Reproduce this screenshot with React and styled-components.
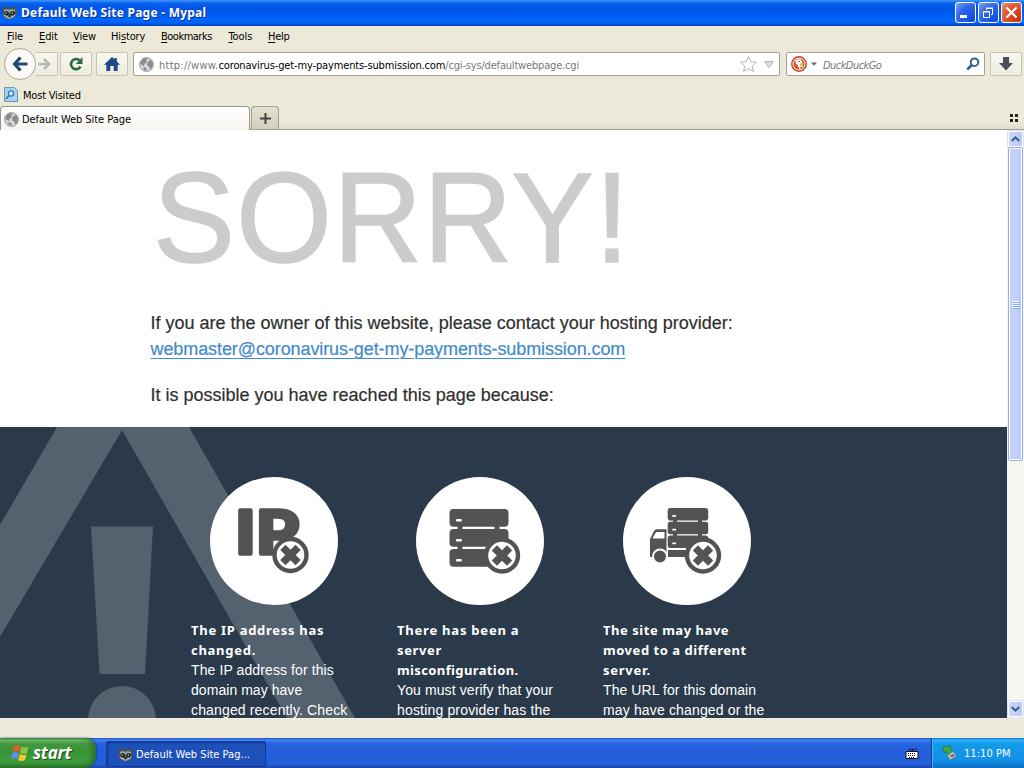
import React from 'react';
import styled, { createGlobalStyle, css } from 'styled-components';

const GlobalStyle = createGlobalStyle`
  * {
    box-sizing: border-box;
  }
  body {
    margin: 0;
    overflow: hidden;
    background: #ece9d8;
  }
`;

const uiFont = css`
  font-family: "DejaVu Sans Condensed", "Noto Sans", sans-serif;
  font-size: 11px;
`;

const Desktop = styled.div`
  ${uiFont}
  width: 1024px;
  height: 768px;
  display: flex;
  flex-direction: column;
  overflow: hidden;
  color: #000;
  background: #ece9d8;
  white-space: nowrap;
  svg {
    display: block;
    flex: none;
  }
`;

const Label = styled.span`
  display: block;
  letter-spacing: ${props => props.$track || 0}px;
  u {
    text-decoration: underline;
    text-underline-offset: 2px;
    text-decoration-thickness: 1px;
  }
`;

const TitleBar = styled.header`
  height: 26px;
  flex: none;
  display: flex;
  align-items: center;
  gap: 4px;
  padding: 0 2px 1px 2px;
  color: #fff;
  font-family: "Noto Sans", sans-serif;
  font-weight: 700;
  font-size: 12px;
  text-shadow: 1px 1px #0b2c94;
  background: linear-gradient(#3f9bff 0, #0a62ee 3px, #0055e5 8px, #0058ee 13px, #0066ff 20px, #0062f4 23px, #003fc0 26px);
`;

const WindowButtons = styled.div`
  display: flex;
  gap: 2px;
  margin-left: auto;
`;

const WindowButton = styled.button`
  width: 21px;
  height: 21px;
  padding: 0;
  display: flex;
  align-items: center;
  justify-content: center;
  border: 1px solid #fff;
  border-radius: 3px;
  background: ${props => (props.$close
    ? 'radial-gradient(circle at 90% 90%, #c8310b, #e1552f 60%, #ef9273)'
    : 'radial-gradient(circle at 90% 90%, #0f4be0, #2f66e8 60%, #7ba5f8)')};
`;

const MenuBar = styled.nav`
  height: 21px;
  flex: none;
  display: flex;
  align-items: center;
  padding-left: 7px;
`;

const MenuItem = styled(Label)`
  width: ${props => props.$width}px;
`;

const Toolbar = styled.div`
  height: 36px;
  flex: none;
  display: flex;
  align-items: center;
  padding: 0 2px 2px 4px;
`;

const BackButton = styled.button`
  width: 32px;
  height: 32px;
  flex: none;
  padding: 0;
  display: flex;
  align-items: center;
  justify-content: center;
  border: 1px solid #aca899;
  border-radius: 50%;
  background: #fbfaf6;
`;

const ToolButton = styled.button`
  width: ${props => props.$width || 32}px;
  height: 24px;
  flex: none;
  padding: 0;
  margin-right: ${props => props.$gap || 0}px;
  display: flex;
  align-items: center;
  justify-content: center;
  border: 1px solid #c9c5b5;
  border-left-width: ${props => (props.$joined ? 0 : 1)}px;
  border-radius: ${props => (props.$joined ? '0 2px 2px 0' : '2px')};
  background: linear-gradient(#f8f7f1, #efecdf);
`;

const Field = styled.div`
  width: ${props => props.$width}px;
  height: 24px;
  flex: none;
  display: flex;
  align-items: center;
  margin-right: ${props => props.$gap}px;
  padding: 0 ${props => props.$end}px 0 ${props => props.$start}px;
  border: 1px solid #a5a195;
  border-radius: 2px;
  background: #fff;
  color: #777;
`;

const Url = styled.span`
  display: block;
  margin: 2px auto 0 5px;
  letter-spacing: 0.25px;
  b {
    font-weight: 400;
    color: #000;
    letter-spacing: -0.14px;
  }
  i {
    font-style: normal;
    letter-spacing: -0.18px;
  }
`;

const Hint = styled(Label)`
  margin: 2px auto 0 5px;
  font-style: italic;
`;

const Bookmarks = styled.div`
  height: 23px;
  flex: none;
  display: flex;
  align-items: center;
  gap: 5px;
  padding: 1px 0 0 4px;
`;

const TabStrip = styled.div`
  height: 24px;
  flex: none;
  display: flex;
  align-items: flex-end;
  border-bottom: 1px solid #a39f92;
  background: linear-gradient(#ece9d8 70%, #e0ddcc);
`;

const Tab = styled.div`
  width: 250px;
  height: 24px;
  margin-bottom: -1px;
  padding: 1px 0 0 3px;
  display: flex;
  align-items: center;
  gap: 3px;
  border: 1px solid #97948a;
  border-bottom: 0;
  border-radius: 4px 4px 0 0;
  background: linear-gradient(#fff, #f6f5ee);
`;

const NewTab = styled.button`
  width: 28px;
  height: 23px;
  margin-left: 1px;
  padding: 0;
  display: flex;
  align-items: center;
  justify-content: center;
  border: 1px solid #a39f92;
  border-bottom: 0;
  border-radius: 4px 4px 0 0;
  background: linear-gradient(#e4e1d2, #d2cfc0);
`;

const TabMenu = styled.div`
  margin: 0 6px 7px auto;
  display: grid;
  grid-template-columns: 3px 3px;
  gap: 2px;
  i {
    height: 3px;
    background: #222;
  }
`;

const Viewport = styled.main`
  height: 588px;
  flex: none;
  display: flex;
  overflow: hidden;
`;

const Page = styled.div`
  width: 1007px;
  flex: none;
  background: #fff;
  color: #2f2f2f;
  font-family: "Liberation Sans", Arial, sans-serif;
  overflow: hidden;
`;

const Intro = styled.section`
  height: 297px;
  padding: 15px 0 0 150.5px;
  font-size: 18px;
  line-height: 26px;
  -webkit-text-stroke: 0.2px;
`;

const Sorry = styled.h1`
  margin: 0 0 20px;
  padding-left: 2px;
  height: 145px;
  color: #ccc;
  font-size: 128px;
  font-weight: 400;
  line-height: 145px;
  letter-spacing: 1.5px;
  -webkit-text-stroke: 1.6px #ccc;
  transform: scaleX(0.96);
  transform-origin: left;
`;

const Line = styled.p`
  margin: 0 0 ${props => props.$after || 0}px;
  letter-spacing: ${props => props.$track || 0}px;
`;

const MailLink = styled.a`
  color: #428bca;
  text-decoration: underline;
  text-decoration-thickness: 1px;
  text-underline-offset: 3px;
`;

const Reasons = styled.section`
  height: 291px;
  position: relative;
  display: flex;
  gap: 41px;
  padding: 50px 0 0 191px;
  background: #2a3a4a;
  color: #fff;
  overflow: hidden;
`;

const WarningSign = styled.svg`
  position: absolute;
  left: 0;
  top: 0;
`;

const Reason = styled.article`
  width: 165px;
  flex: none;
  position: relative;
  font-size: 14px;
  line-height: 20px;
`;

const Badge = styled.div`
  width: 128px;
  height: 128px;
  margin: 0 0 15px ${props => props.$left}px;
  border-radius: 50%;
  background: #fff;
`;

const Strong = styled(Label)`
  font-family: "Noto Sans", sans-serif;
  font-weight: 700;
  font-size: 13px;
`;

const ScrollBar = styled.div`
  width: 17px;
  display: flex;
  flex-direction: column;
  background: #f6f5ef;
  border-left: 1px solid #f0f3fa;
`;

const ScrollButton = styled.div`
  width: 15px;
  height: 16px;
  margin: 1px 0 1px;
  display: flex;
  align-items: center;
  justify-content: center;
  border: 1px solid #fff;
  border-radius: 2px;
  background: linear-gradient(90deg, #ccd8fc, #b9c9f5);
  box-shadow: 0 0 0 1px #d5e0fb;
`;

const Thumb = styled.div`
  width: 15px;
  height: 314px;
  margin: -1px 0 auto;
  display: flex;
  flex-direction: column;
  align-items: center;
  justify-content: center;
  gap: 1px;
  border: 1px solid #98b0e4;
  border-radius: 2px;
  box-shadow: inset 0 0 0 1px #fff;
  background: linear-gradient(90deg, #c4cffb 55%, #b4ccfc);
  i {
    width: 7px;
    height: 1px;
    background: #eef4fe;
    box-shadow: 1px 1px #8cb0f8;
  }
`;

const StatusBar = styled.div`
  height: 20px;
  flex: none;
  border-top: 1px solid #f3f1e6;
`;

const TaskBar = styled.footer`
  height: 30px;
  flex: none;
  display: flex;
  align-items: stretch;
  color: #fff;
  background: linear-gradient(#1f4fc0 0, #3f86f2 2px, #2a66e0 5px, #245edb 10px, #245edb 26px, #1c46a8 30px);
`;

const StartButton = styled.button`
  width: 96px;
  padding: 0 0 1px 10px;
  display: flex;
  align-items: center;
  gap: 3px;
  border: 0;
  border-radius: 0 10px 12px 0;
  color: #fff;
  font-family: "Noto Sans", sans-serif;
  font-style: italic;
  font-weight: 700;
  font-size: 17px;
  text-shadow: 1px 1px 1px #1c4a1c;
  background: linear-gradient(#2d7a2f 0, #6cb968 2px, #42963f 6px, #379437 14px, #3c9d3c 24px, #2b702b 30px);
  box-shadow: inset -6px 0 6px -3px #246b26, 1px 0 2px #1a45a8;
`;

const TaskButton = styled.div`
  width: 160px;
  height: 26px;
  margin: 3px 0 0 10px;
  padding-left: 11px;
  display: flex;
  align-items: center;
  gap: 3px;
  border: 1px solid #123a9c;
  border-radius: 2px;
  background: #1e50b9;
  box-shadow: inset 1px 1px 2px #143c92;
`;

const TrayIcons = styled.div`
  display: flex;
  align-items: center;
  margin-left: auto;
  padding: 0 12px 0 0;
`;

const Tray = styled.div`
  width: 93px;
  display: flex;
  align-items: center;
  gap: 6px;
  padding-left: 10px;
  border-left: 1px solid #0a3a9a;
  box-shadow: inset 1px 0 #3cc0f8;
  background: linear-gradient(#0d6fd0 0, #2fb4f6 2px, #159bea 5px, #1290e8 22px, #0f6fc4 30px);
`;

const Raccoon = ({ size = 15 }) => (
  <svg width={size} height={size} viewBox="0 0 16 16">
    <path d="M.5 1l4.500 2L8 2.300 11.500 3l4-2-.5 6 1 3-3 3.500-4.500 2h-1L3 13.500 0 10l1-3z" fill="#4a5350" />
    <path d="M2.500 5L7 4.500l1 2 1-2 4.500.5.5 2-3-1-2.200.8L8 8.500l-.8-1.700L5 6 2 7z" fill="#aab5b0" />
    <path d="M1 10l2.500.5 3 1.500h3l3-1.500L15 10l-2.500 3L8 15l-4.500-2z" fill="#a3aea9" />
    <circle cx="4.800" cy="9" r="2" fill="#0e161b" />
    <circle cx="11.200" cy="9" r="2" fill="#0e161b" />
    <path d="M3.800 8h1.300v1.300H3.800zM10.300 8h1.300v1.300h-1.300z" fill="#fff" />
    <path d="M6.500 11.500h3L8 13.500z" fill="#080c10" />
  </svg>
);

const Globe = () => (
  <svg width="15" height="15" viewBox="0 0 15 15">
    <circle cx="7.5" cy="7.5" r="6.9" fill="#d8d8d8" stroke="#969696" />
    <path d="M1 6.5L3.5 2 7 1l1.5 1.5L7 4l1 1.500-2.500 1L5 9 3 8zM9.500 4L12 3l2 3.500-.8 4-2 2-1-3L8 8.300l.5-2.500zM4.500 10l3 1v2.700l-3-1z" fill="#8b8b8b" />
  </svg>
);

const Cross = ({ x, y, r = 16 }) => (
  <g transform={`translate(${x} ${y})`}>
    <circle r={r} fill="#fff" stroke="#535353" strokeWidth="4.4" />
    <path d="M-7.6-7.6L7.6 7.6M-7.6 7.6L7.6-7.6" stroke="#535353" strokeWidth="7.4" />
  </g>
);

const Slab = ({ x, y, w, h }) => (
  <g>
    <rect x={x} y={y} width={w} height={h} rx={h / 4.5} fill="#535353" />
    <rect x={x + w * 0.11} y={y + h * 0.56} width={w * 0.1} height={h * 0.14} rx="1" fill="#fff" />
  </g>
);

const IpIcon = () => (
  <svg width="128" height="128" viewBox="0 0 128 128">
    <text
      x="25"
      y="77"
      textLength="64"
      lengthAdjust="spacingAndGlyphs"
      fontFamily="Lato, sans-serif"
      fontWeight="900"
      fontSize="60"
      fill="#535353"
      stroke="#535353"
      strokeWidth="3.6"
      strokeLinejoin="round"
    >
      IP
    </text>
    <Cross x={80.5} y={78} />
  </svg>
);

const ServerIcon = () => (
  <svg width="128" height="128" viewBox="0 0 128 128">
    <path d="M44 45v35M81 45v30" stroke="#535353" strokeWidth="5" />
    {[32, 52, 72].map(y => <Slab key={y} x={33.5} y={y} w={59} h={17.8} />)}
    <Cross x={86} y={78.5} />
  </svg>
);

const TruckIcon = () => (
  <svg width="128" height="128" viewBox="0 0 128 128">
    <path d="M52 40v20M77 40v20" stroke="#535353" strokeWidth="4" />
    {[31, 44.7, 58.4].map(y => <Slab key={y} x={44.7} y={y} w={40.5} h={12.6} />)}
    <path d="M45 73h25v7H45z" fill="#535353" />
    <path d="M27 80V62l4-8q1-1.8 3-1.8h9.500V80zM29.500 61.500h12V55h-7q-1.500 0-2.200 1.300z" fill="#535353" fillRule="evenodd" />
    <circle cx="37" cy="79.500" r="7" fill="#535353" stroke="#fff" strokeWidth="2" />
    <Cross x={80} y={78.5} />
  </svg>
);

const menu = [
  ['', 'F', 'ile', 32, -0.1],
  ['', 'E', 'dit', 34, -0.1],
  ['', 'V', 'iew', 38, -0.1],
  ['Hi', 's', 'tory', 50, -0.15],
  ['', 'B', 'ookmarks', 67.5, -0.5],
  ['', 'T', 'ools', 39.5, -0.1],
  ['', 'H', 'elp', 30, -0.3],
];

const reasons = [
  {
    icon: <IpIcon />,
    title: [['The IP address has', 0.72], ['changed.', 0.72]],
    text: [['The IP address for this', 0.1], ['domain may have', 0.05], ['changed recently. Check', 0.15]],
  },
  {
    icon: <ServerIcon />,
    title: [['There has been a', 0.78], ['server', 0.64], ['misconfiguration.', 0.38]],
    text: [['You must verify that your', 0.1], ['hosting provider has the', 0.17]],
  },
  {
    icon: <TruckIcon />,
    left: 20,
    title: [['The site may have', 0.54], ['moved to a different', 0.54], ['server.', 0.74]],
    text: [['The URL for this domain', 0.08], ['may have changed or the', 0.15]],
  },
];

function BrowserChrome() {
  return (
    <>
      <TitleBar>
        <Raccoon />
        <Label $track={0.24}>Default Web Site Page - Mypal</Label>
        <WindowButtons>
          <WindowButton>
            <svg width="19" height="19"><path d="M4 12h7v3H4z" fill="#fff" /></svg>
          </WindowButton>
          <WindowButton>
            <svg width="19" height="19" fill="none" stroke="#fff">
              <path d="M7.500 7V5.500h6v6H12M7 5h7M4.500 8.500h6v6h-6zM4 9h7" />
            </svg>
          </WindowButton>
          <WindowButton $close>
            <svg width="19" height="19"><path d="M4.500 4.500l10 10M14.500 4.500l-10 10" stroke="#fff" strokeWidth="2.2" /></svg>
          </WindowButton>
        </WindowButtons>
      </TitleBar>
      <MenuBar>
        {menu.map(([before, key, after, width, track]) => (
          <MenuItem key={key + after} $width={width} $track={track}>
            {before}<u>{key}</u>{after}
          </MenuItem>
        ))}
      </MenuBar>
      <Toolbar>
        <BackButton>
          <svg width="18" height="18" fill="none" stroke="#1f4a80" strokeWidth="3.2">
            <path d="M9.500 2.500L3.500 9l6 6.500M4 9h12.500" />
          </svg>
        </BackButton>
        <ToolButton $width={22} $gap={2} $joined>
          <svg width="18" height="14" fill="none" stroke="#b4bab8" strokeWidth="2.6">
            <path d="M6 2l5 5-5 5M0 7h10.500" />
          </svg>
        </ToolButton>
        <ToolButton $gap={4}>
          <svg width="16" height="16" fill="none" stroke="#27683e" strokeWidth="2.6">
            <path d="M12.500 10.700A5.100 5.100 0 1 1 11.500 4.300" />
            <path d="M14.500 1v7H7.800z" fill="#27683e" stroke="none" />
          </svg>
        </ToolButton>
        <ToolButton $gap={5}>
          <svg width="16" height="14" fill="#1f4a85">
            <path d="M8 0l2.500 2.300V1h2.300v3.500L16 7.700h-2.300V14H9.700V9H6.300v5H2.300V7.700H0z" />
          </svg>
        </ToolButton>
        <Field $width={647} $gap={6} $start={5} $end={2}>
          <Globe />
          <Url>
            http://www.<b>coronavirus-get-my-payments-submission.com</b><i>/cgi-sys/defaultwebpage.cgi</i>
          </Url>
          <svg width="38" height="18" fill="#fff" stroke="#b5b5b5">
            <path d="M9.500 1.500l2.300 5.200 5.700.5-4.300 3.800 1.300 5.500-5-2.900-5 2.900 1.300-5.500L1.500 7.200l5.700-.5z" />
            <path d="M25.500 6.500h9l-4.500 6z" fill="#ddd" />
          </svg>
        </Field>
        <Field $width={199} $gap={5} $start={4} $end={4}>
          <svg width="27" height="16">
            <circle cx="8" cy="8" r="7.200" fill="#fff" stroke="#cb3f1b" strokeWidth="1.500" />
            <circle cx="8" cy="8" r="5.500" fill="#d9512b" />
            <path d="M4.500 4.500Q7.500 1.500 10.500 4.500l1 3 .5 4-3.500 1.500-2-4-2-2z" fill="#fff" />
            <path d="M8.500 7.500l4-.5-1 1.500 1 .5-3 1z" fill="#f2b21c" />
            <path d="M8.500 11l3.500-.5-1 2.500z" fill="#4f9e35" />
            <circle cx="8" cy="5.500" r=".7" fill="#234" />
            <path d="M20 6.500h6l-3 3.200z" fill="#666" />
          </svg>
          <Hint $track={-0.55}>DuckDuckGo</Hint>
          <svg width="14" height="14" fill="none" stroke="#2a648f">
            <circle cx="8.500" cy="5.200" r="3.800" strokeWidth="2" />
            <path d="M5.800 8L1.200 12.700" strokeWidth="2.600" />
          </svg>
        </Field>
        <ToolButton>
          <svg width="16" height="16"><path d="M5 1h6v6h4l-7 7.500L1 7h4z" fill="#4b4e56" /></svg>
        </ToolButton>
      </Toolbar>
      <Bookmarks>
        <svg width="14" height="16">
          <path d="M.5.5h10l3 3v11H.5z" fill="#a8d3ee" stroke="#5e9cc4" />
          <circle cx="7" cy="6.500" r="2.600" fill="#d9effb" stroke="#2b77a8" strokeWidth="1.300" />
          <path d="M5 8.500l-3 3.500" stroke="#2b77a8" strokeWidth="1.800" />
        </svg>
        <Label $track={-0.2}>Most Visited</Label>
      </Bookmarks>
      <TabStrip>
        <Tab>
          <Globe />
          <Label $track={-0.05}>Default Web Site Page</Label>
        </Tab>
        <NewTab>
          <svg width="11" height="11"><path d="M5.500 0v11M0 5.500h11" stroke="#444" strokeWidth="2" /></svg>
        </NewTab>
        <TabMenu><i /><i /><i /><i /></TabMenu>
      </TabStrip>
    </>
  );
}

function DefaultPage() {
  return (
    <Page>
      <Intro>
        <Sorry>SORRY!</Sorry>
        <Line>If you are the owner of this website, please contact your hosting provider:</Line>
        <Line $after={20} $track={-0.09}>
          <MailLink>webmaster@coronavirus-get-my-payments-submission.com</MailLink>
        </Line>
        <Line>It is possible you have reached this page because:</Line>
      </Intro>
      <Reasons>
        <WarningSign width="400" height="291" fill="#54616e">
          <path d="M57 0H189L355 291H287L122 3 0 210V98z" />
          <path d="M91 99.500h62L145 247H99.500z" />
          <circle cx="122" cy="293" r="34" />
        </WarningSign>
        {reasons.map(reason => (
          <Reason key={reason.title[0][0]}>
            <Badge $left={reason.left || 19}>{reason.icon}</Badge>
            {reason.title.map(([line, track]) => <Strong key={line} $track={track}>{line}</Strong>)}
            {reason.text.map(([line, track]) => <Label key={line} $track={track}>{line}</Label>)}
          </Reason>
        ))}
      </Reasons>
    </Page>
  );
}

function App() {
  return (
    <Desktop>
      <GlobalStyle />
      <BrowserChrome />
      <Viewport>
        <DefaultPage />
        <ScrollBar>
          <ScrollButton>
            <svg width="9" height="6" fill="none" stroke="#465a86" strokeWidth="2"><path d="M.7 5L4.500 1.400 8.300 5" /></svg>
          </ScrollButton>
          <Thumb><i /><i /><i /><i /></Thumb>
          <ScrollButton>
            <svg width="9" height="6" fill="none" stroke="#465a86" strokeWidth="2"><path d="M.7 1L4.500 4.600 8.300 1" /></svg>
          </ScrollButton>
        </ScrollBar>
      </Viewport>
      <StatusBar />
      <TaskBar>
        <StartButton>
          <svg width="20" height="18" viewBox="0 0 20 18">
            <path d="M4 2q3-2 6.500 0L9 8q-3-2-6.500 0z" fill="#e8582c" />
            <path d="M11.200 2.500q3.500 2 7 .3L17 9q-3.500 2-7 0z" fill="#8ac640" />
            <path d="M2.200 9q3-2 6.500 0L7.200 15q-3-2-6.500 0z" fill="#5b8cf0" />
            <path d="M9.600 10q3.500 2 7 .2L15 16q-3.300 2-6.800 0z" fill="#f7c629" />
          </svg>
          <Label $track={-0.2}>start</Label>
        </StartButton>
        <TaskButton>
          <Raccoon />
          <Label $track={0.03}>Default Web Site Pag...</Label>
        </TaskButton>
        <TrayIcons>
          <svg width="14" height="14">
            <path d="M1 5.500h12v7H1z" fill="#fff" stroke="#111" />
            <path d="M3 7.500h8M3 9.500h8M4 11.500h6" stroke="#111" strokeDasharray="1 1" />
            <path d="M7 5V3.500h-3V2M7 3.500h4V2" stroke="#111" strokeDasharray="2 1" fill="none" />
          </svg>
        </TrayIcons>
        <Tray>
          <svg width="16" height="16">
            <path d="M5 10l5-4 4 3v3l-6 3z" fill="#b9c2c4" stroke="#58666b" strokeWidth=".7" />
            <path d="M8 11l3-2 2 1.500-3 2z" fill="#59707c" />
            <path d="M1 2l8-1-.5 3L10 6.500l-3 3-2-3L2 8z" fill="#3fae35" stroke="#1c6b22" strokeWidth=".6" />
          </svg>
          <Label $track={0.05}>11:10 PM</Label>
        </Tray>
      </TaskBar>
    </Desktop>
  );
}

export default App;
